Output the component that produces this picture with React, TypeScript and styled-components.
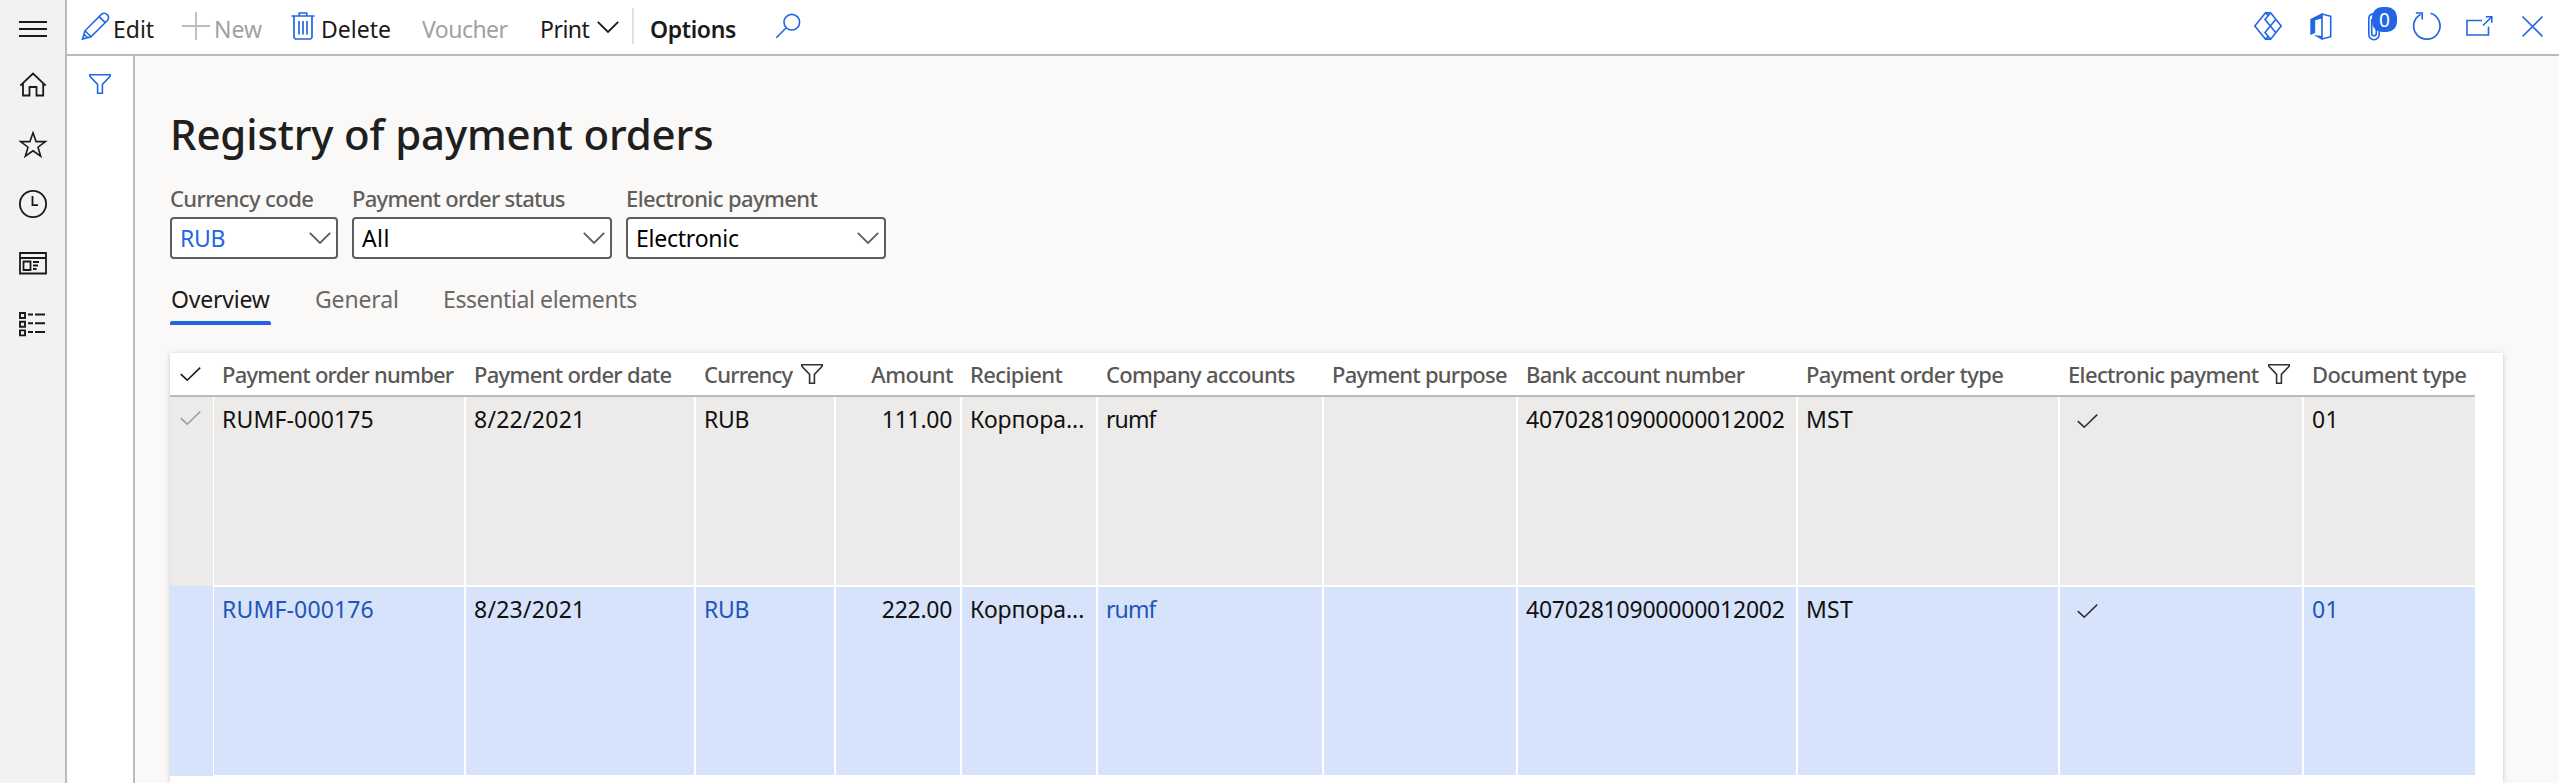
import React from "react";
import styled, { createGlobalStyle } from "styled-components";

const BLUE = "#2266e3";

const Global = createGlobalStyle`
  * { box-sizing: border-box; }
  html, body { margin: 0; padding: 0; }
  body { font-family: "Noto Sans", "Open Sans", sans-serif; font-size: 23px; color: #1b1a19; background: #faf9f8; }
  svg { display: block; flex: none; overflow: visible; fill: none; stroke: currentColor; }
`;

const Page = styled.div`display: flex; width: 2559px; height: 783px; overflow: hidden;`;

const NavRail = styled.nav`
  width: 67px; flex: none; background: #f3f2f1; border-right: 2px solid #bdbbb9;
  display: flex; flex-direction: column;
`;
const NavItem = styled.a<{ $first?: boolean }>`
  height: ${(p) => (p.$first ? 55 : 60)}px; padding-top: ${(p) => (p.$first ? 3 : 0)}px;
  display: flex; align-items: center; justify-content: center;
`;

const Main = styled.div`flex: 1; display: flex; flex-direction: column; min-width: 0;`;
const Toolbar = styled.header`
  height: 56px; flex: none; background: #fff; border-bottom: 2px solid #bdbbb9;
  display: flex; padding-left: 14px;
`;
const ToolButton = styled.button<{ $width: number; $disabled?: boolean; $strong?: boolean; $gap?: number; $ls?: number }>`
  width: ${(p) => p.$width}px; flex: none; height: 54px; border: 0; padding: 0; background: none;
  display: flex; align-items: center; gap: ${(p) => p.$gap ?? 4}px;
  font: ${(p) => (p.$strong ? 600 : 400)} 23px/50px "Noto Sans", sans-serif;
  letter-spacing: ${(p) => p.$ls ?? 0}px; white-space: nowrap;
  color: ${(p) => (p.$disabled ? "#a3a19f" : "#1b1a19")};
  padding-left: ${(p) => (p.$strong ? 16 : 0)}px;
`;
const ToolText = styled.span`padding-top: 4px;`;
const ToolIcon = styled.span<{ $muted?: boolean }>`
  color: ${(p) => (p.$muted ? "#bebcba" : BLUE)}; padding-bottom: 2px;
`;
const Divider = styled.i`width: 2px; height: 36px; margin-top: 8px; background: #e1dfdd; flex: none;`;
const SystemTray = styled.div`margin-left: auto; display: flex; color: ${BLUE};`;
const TrayButton = styled.span`
  width: 53px; height: 54px; padding-bottom: 2px; position: relative;
  display: flex; align-items: center; justify-content: center;
`;
const Badge = styled.b`
  position: absolute; left: 25px; top: 7px; width: 25px; height: 25px; border-radius: 10px;
  background: ${BLUE}; color: #fff; font: 400 19px/27px "Noto Sans", sans-serif; text-align: center;
`;

const Body = styled.div`flex: 1; display: flex; min-height: 0;`;
const FilterRail = styled.aside`
  width: 68px; flex: none; background: #fff; border-right: 2px solid #bdbbb9; color: ${BLUE};
  display: flex; justify-content: center; padding-top: 18px;
`;
const Content = styled.main`
  flex: 1; min-width: 0; padding: 50px 56px 0 35px; display: flex; flex-direction: column;
`;
const Title = styled.h1`
  margin: 0; font-size: 42px; line-height: 56px; font-weight: 500; letter-spacing: -0.15px; color: #201f1e;
`;

const Fields = styled.div`display: flex; gap: 14px; margin-top: 21px;`;
const Field = styled.label<{ $width: number }>`
  width: ${(p) => p.$width}px; display: flex; flex-direction: column; gap: 4px;
`;
const FieldLabel = styled.span<{ $ls: number }>`
  font-size: 22px; font-weight: 500; line-height: 30px; white-space: nowrap; color: #605e5c;
  letter-spacing: ${(p) => p.$ls}px;
`;
const Select = styled.div<{ $link?: boolean; $ls?: number }>`
  height: 42px; border: 2px solid #605e5c; border-radius: 4px; background: #fff;
  padding: 0 5px 0 8px; display: flex; align-items: center; justify-content: space-between;
  line-height: 38px; color: ${(p) => (p.$link ? BLUE : "#000")}; letter-spacing: ${(p) => p.$ls ?? 0}px;
  svg { color: #605e5c; }
`;

const Tabs = styled.div`display: flex; margin-top: 20px; height: 46px; line-height: 40px; color: #6b6967;`;
const Tab = styled.div<{ $width: number; $ls: number }>`
  width: ${(p) => p.$width}px; letter-spacing: ${(p) => p.$ls}px; white-space: nowrap;
`;
const ActiveTab = styled.div`
  width: 101px; margin-right: 44px; padding-left: 1px; color: #1b1a19; letter-spacing: -0.2px;
  display: flex; flex-direction: column; justify-content: space-between;
  &::after { content: ""; height: 4px; background: ${BLUE}; border-radius: 2px 2px 0 0; margin-left: -1px; }
`;

const Card = styled.section`
  margin-top: 28px; flex: 1; background: #fff; padding-right: 28px;
  box-shadow: 0 1px 4px rgba(0, 0, 0, 0.16), 0 0 10px rgba(0, 0, 0, 0.06);
`;
const COLUMNS = "44px 252px 230px 140px 126px 136px 226px 194px 280px 262px 244px 171px";
const HeaderRow = styled.div`
  display: grid; grid-template-columns: ${COLUMNS}; height: 44px; border-bottom: 2px solid #bdbbb9;
`;
const HeaderCell = styled.div<{ $ls?: number; $right?: boolean }>`
  display: flex; gap: 9px; padding: 0 9px 0 8px; font-size: 22px; font-weight: 500; line-height: 42px;
  color: #5a5856; white-space: nowrap; letter-spacing: ${(p) => p.$ls ?? 0}px;
  justify-content: ${(p) => (p.$right ? "flex-end" : "flex-start")};
  svg { margin-top: 11px; color: #323130; }
`;
const HeaderCheck = styled.div`padding: 14px 0 0 10px; color: #1b1a19;`;
const Row = styled.div<{ $selected?: boolean }>`
  display: grid; grid-template-columns: ${COLUMNS};
  height: ${(p) => (p.$selected ? 190 : 189)}px;
  --fill: ${(p) => (p.$selected ? "#d7e3fb" : "#ecebe9")};
  --edge: ${(p) => (p.$selected ? "1px" : "0")};
`;
const RowCheck = styled.div`
  background: var(--fill); background-clip: padding-box; border-right: 1px solid #fff;
  padding: 14px 0 0 10px; color: #a19f9d;
`;
const Cell = styled.div<{ $link?: boolean; $right?: boolean; $last?: boolean; $ls?: number }>`
  background: var(--fill); background-clip: padding-box;
  border: 0 solid #fff; border-width: var(--edge) ${(p) => (p.$last ? 0 : 2)}px 1px 0;
  padding: 0 ${(p) => (p.$right ? 8 : 0)}px 0 8px; line-height: 44px; white-space: nowrap;
  text-align: ${(p) => (p.$right ? "right" : "left")};
  color: ${(p) => (p.$link ? "#2255b5" : "#111")}; letter-spacing: ${(p) => p.$ls ?? 0}px;
  svg { margin: 17px 0 0 9px; color: #323130; }
`;

const Chevron = () => (
  <svg width="22" height="12" strokeWidth="1.8"><path d="M.8 .8 11 11 21.2 .8" /></svg>
);
const Funnel = () => (
  <svg width="22" height="20" strokeWidth="1.6"><path d="M.8 .8H21.2V2.2L13.4 10.4V19.2H8.6V10.4L.8 2.2Z" /></svg>
);
const Check = () => (
  <svg width="21" height="14" strokeWidth="1.6"><path d="M.8 7.2 7.2 13.2 20.2 .6" /></svg>
);
const Icon28 = ({ children, w = 1.8 }: { children: React.ReactNode; w?: number }) => (
  <svg width="28" height="28" strokeWidth={w}>{children}</svg>
);

const columns: { title: string; ls?: number; right?: boolean; filter?: boolean }[] = [
  { title: "Payment order number", ls: -0.76 },
  { title: "Payment order date", ls: -0.69 },
  { title: "Currency", ls: -0.81, filter: true },
  { title: "Amount", ls: -0.5, right: true },
  { title: "Recipient", ls: -0.6 },
  { title: "Company accounts", ls: -0.7 },
  { title: "Payment purpose", ls: -0.76 },
  { title: "Bank account number", ls: -0.73 },
  { title: "Payment order type", ls: -0.65 },
  { title: "Electronic payment", ls: -0.64, filter: true },
  { title: "Document type", ls: -0.58 },
];

const rows = [
  { number: "RUMF-000175", date: "8/22/2021", amount: "111.00", selected: false },
  { number: "RUMF-000176", date: "8/23/2021", amount: "222.00", selected: true },
];

export default function App() {
  return (
    <Page>
      <Global />
      <NavRail>
        <NavItem $first><Icon28 w={2}><path d="M0 7H28M0 14H28M0 21H28" /></Icon28></NavItem>
        <NavItem><Icon28><path d="M1.3 14.6 14 2.5 26.7 14.6M4 12.2V24.5H10.5V16H17.5V24.5H24.2V12.2" /></Icon28></NavItem>
        <NavItem><Icon28 w={1.6}><path d="M14 1.8 17.1 10.6H26.4L19 16.2 21.7 25.2 14 19.8 6.3 25.2 9 16.2 1.6 10.6H10.9Z" /></Icon28></NavItem>
        <NavItem><Icon28><circle cx="14" cy="13" r="13.1" /><path d="M13.5 5V14.2H19" /></Icon28></NavItem>
        <NavItem><Icon28 w={1.8}><path d="M1 2H27V22.5H1ZM1 7H27" /><path d="M4.5 10.5H11.5V19H4.5ZM14 11H20M14 14.5H19M14 18H17.5" /></Icon28></NavItem>
        <NavItem><Icon28 w={1.9}><path d="M1 2H6V7H1ZM1 10.7H6V15.7H1ZM1 19.4H6V24.4H1ZM9 3.5H14M16 3.5H26M9 12.3H14M16 12.3H26M9 21H14M16 21H26" /></Icon28></NavItem>
      </NavRail>
      <Main>
        <Toolbar>
          <ToolButton $width={101}>
            <ToolIcon><Icon28 w={1.6}><path d="M1.5 27 4 18.8 20.6 2.2A4.3 4.3 0 0 1 26.6 8.2L10 24.8ZM4 18.8 10 24.8M18.2 4.6 24.2 10.6M3 22.2 6.6 25.8" /></Icon28></ToolIcon>
            <ToolText>Edit</ToolText>
          </ToolButton>
          <ToolButton $width={109} $disabled>
            <ToolIcon $muted><Icon28><path d="M0 14H28M14 0V28" /></Icon28></ToolIcon>
            <ToolText>New</ToolText>
          </ToolButton>
          <ToolButton $width={131} $gap={6}>
            <ToolIcon><svg width="24" height="28" strokeWidth="1.7"><path d="M.5 4H23.5M3 4V25.5L4.3 27H19.7L21 25.5V4M8.3 4V1H15.7V4M8 9V22.5M12 9V22.5M16 9V22.5" /></svg></ToolIcon>
            <ToolText>Delete</ToolText>
          </ToolButton>
          <ToolButton $width={118} $disabled $ls={-0.53}><ToolText>Voucher</ToolText></ToolButton>
          <ToolButton $width={92} $gap={8} $ls={-0.5}><ToolText>Print</ToolText><Chevron /></ToolButton>
          <Divider />
          <ToolButton $width={142} $strong $ls={-0.37}><ToolText>Options</ToolText></ToolButton>
          <ToolButton $width={40}>
            <ToolIcon><svg width="24" height="24" strokeWidth="1.6"><circle cx="15.8" cy="8.2" r="7.8" /><path d="M10.2 13.8 .3 23.7" /></svg></ToolIcon>
          </ToolButton>
          <SystemTray>
            <TrayButton><Icon28 w={1.6}><path d="M14.2 3.6 11.6 .8 .8 14 11.6 27.2 14.2 24.4M16.6 .8 27.2 14 16.6 27.2 11 20.5 21.9 7.2M16.6 .8 11 7.5 21.9 20.8M11.6 .8H16.6M11.6 27.2H16.6" /></Icon28></TrayButton>
            <TrayButton><svg width="22" height="27" strokeWidth="1.6"><path d="M12 1 20.7 3.3V23.7L12 26V1Z" /><path fill="currentColor" stroke="none" d="M.3 6 12 .2V5.6L5.2 7.3V20L.3 22ZM3.6 22 12 23V26.8Z" /></svg></TrayButton>
            <TrayButton><svg width="12" height="28" strokeWidth="1.6"><path d="M11.2 6V22.5A5 5 0 0 1 .8 22.5V6A4.5 4.5 0 0 1 9 4M8.3 8V21.5A2.3 2.3 0 0 1 3.7 21.5V7" /></svg><Badge>0</Badge></TrayButton>
            <TrayButton><Icon28 w={1.7}><path d="M17.5 1.3A13.2 13.2 0 1 1 7.5 2.4M2.8 1H9.2V7.4" /></Icon28></TrayButton>
            <TrayButton><svg width="27" height="20" strokeWidth="1.6"><path d="M16 4.5H1V19H22.5V10.5M17 9.5 25.8 .8M19.8 .8H25.8V6.8" /></svg></TrayButton>
            <TrayButton><svg width="21" height="21" strokeWidth="1.7"><path d="M.5 .5 20.5 20.5M20.5 .5 .5 20.5" /></svg></TrayButton>
          </SystemTray>
        </Toolbar>
        <Body>
          <FilterRail><Funnel /></FilterRail>
          <Content>
            <Title>Registry of payment orders</Title>
            <Fields>
              <Field $width={168}><FieldLabel $ls={-0.6}>Currency code</FieldLabel><Select $link $ls={-0.3}>RUB<Chevron /></Select></Field>
              <Field $width={260}><FieldLabel $ls={-0.72}>Payment order status</FieldLabel><Select $ls={0.4}>All<Chevron /></Select></Field>
              <Field $width={260}><FieldLabel $ls={-0.6}>Electronic payment</FieldLabel><Select $ls={-0.24}>Electronic<Chevron /></Select></Field>
            </Fields>
            <Tabs>
              <ActiveTab>Overview</ActiveTab>
              <Tab $width={128} $ls={-0.14}>General</Tab>
              <Tab $width={200} $ls={-0.4}>Essential elements</Tab>
            </Tabs>
            <Card>
              <HeaderRow>
                <HeaderCheck><Check /></HeaderCheck>
                {columns.map((c) => (
                  <HeaderCell key={c.title} $ls={c.ls} $right={c.right}>{c.title}{c.filter && <Funnel />}</HeaderCell>
                ))}
              </HeaderRow>
              {rows.map((r) => (
                <Row key={r.number} $selected={r.selected}>
                  <RowCheck>{!r.selected && <Check />}</RowCheck>
                  <Cell $link={r.selected} $ls={0.15}>{r.number}</Cell>
                  <Cell $ls={0.25}>{r.date}</Cell>
                  <Cell $link={r.selected} $ls={-0.3}>RUB</Cell>
                  <Cell $right $ls={-0.3}>{r.amount}</Cell>
                  <Cell $ls={0}>Корпора...</Cell>
                  <Cell $link={r.selected} $ls={-0.9}>rumf</Cell>
                  <Cell />
                  <Cell $ls={-0.22}>40702810900000012002</Cell>
                  <Cell $ls={0.2}>MST</Cell>
                  <Cell><Check /></Cell>
                  <Cell $link={r.selected} $last $ls={0.4}>01</Cell>
                </Row>
              ))}
            </Card>
          </Content>
        </Body>
      </Main>
    </Page>
  );
}
